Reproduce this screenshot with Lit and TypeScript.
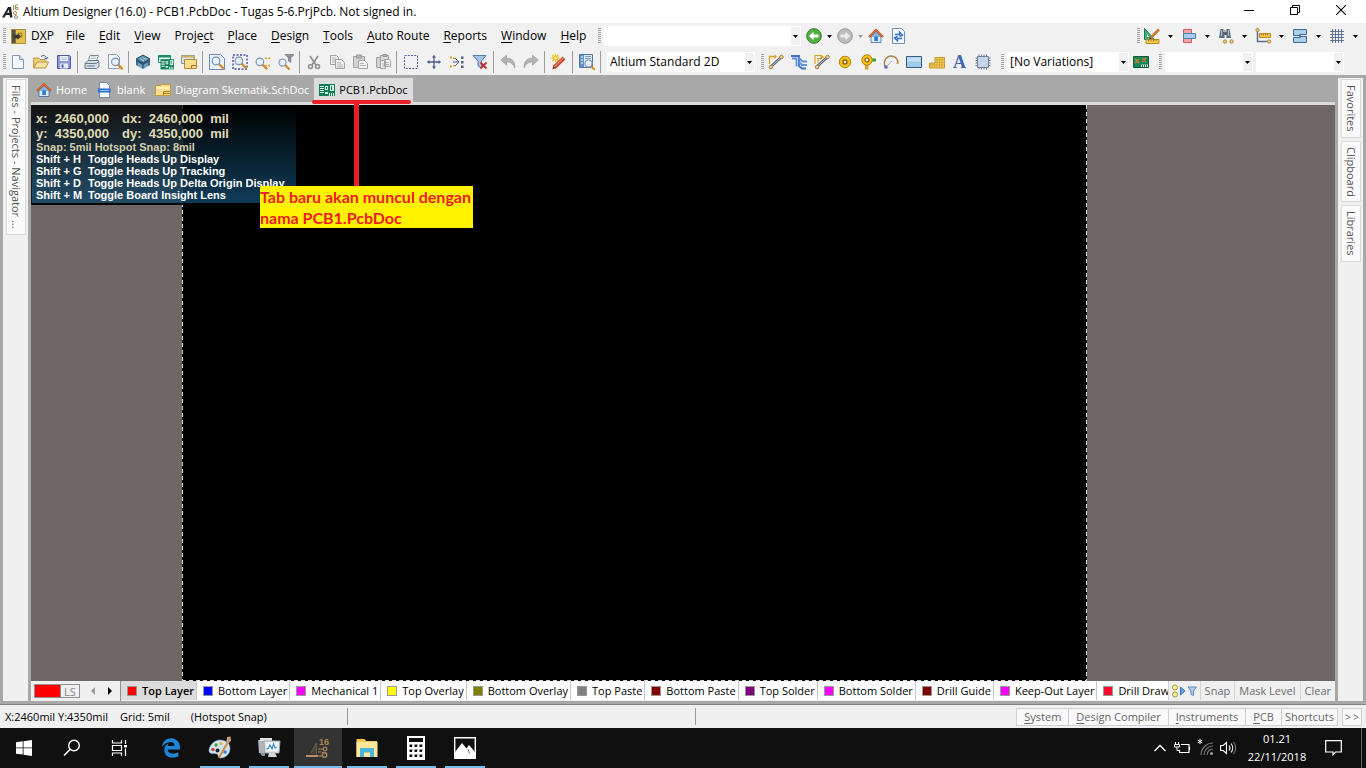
import { LitElement, html, svg, css, nothing } from "lit";
import { customElement, state } from "lit/decorators.js";
import { classMap } from "lit/directives/class-map.js";
import { styleMap } from "lit/directives/style-map.js";

const lens = svg`
  <path d="M9.5 9.5 14 14" stroke="#d98a2b" stroke-width="2.6" stroke-linecap="round"/>
  <circle cx="6.5" cy="6.5" r="4.2" fill="#e4f0fb" stroke="#7d93b5" stroke-width="1.3"/>
  <path d="M4.3 6.2a2.4 2.4 0 0 1 2.2-2" stroke="#fff" fill="none"/>`;

const trackPads = svg`
  <path d="M3 12.500 13.500 3" stroke="#5c636e" stroke-width="2.600"/>
  <path d="M3 12.500 13.500 3" stroke="#b9c0c9" stroke-width="1"/>
  <circle cx="3" cy="13" r="1.800" fill="#e6cf9a" stroke="#a98243"/>
  <circle cx="13.500" cy="3" r="1.800" fill="#e6cf9a" stroke="#a98243"/>`;

const house = svg`
  <path d="M3 8v6.500h10V8L8 3.400z" fill="#7fb2e4" stroke="#4a6f9e" stroke-width=".8"/>
  <path d="M3.600 9h8.800v5H3.600z" fill="#dceafa"/>
  <path d="M6.300 8.500h3.600V13H6.300z" fill="#2a76c8"/>
  <path d="M1 9 8 2l7 7" fill="none" stroke="#c4501e" stroke-width="2.200"/>
  <path d="M1.400 8.200 8 1.800l6.600 6.400" fill="none" stroke="#f0935c" stroke-width=".7"/>`;

const board = svg`
  <path d="M0 2h16v12H0z" fill="#0f7d57"/>
  <path d="M1 4h4v1H1zm0 2h4v1H1zm0 2h4v1H1zm0 2h4v1H1z" fill="#d5f3e4"/>
  <path d="M6 4h3v4H6zM6 10h3v2H6z" fill="#d5f3e4"/>
  <path d="M7 5h1v2H7z" fill="#0f7d57"/>
  <path d="M11 3h4v6h-4z" fill="#d5f3e4"/>
  <path d="M12 4h1v4h-1z" fill="#0f7d57"/>
  <path d="M10 11h1v3h-1zm2 0h1v3h-1zm2 0h1v3h-1z" fill="#d5f3e4"/>`;

const sheet = svg`
  <path d="M.5 3.500h5l1-1h9v11H.5z" fill="#f6dc8c" stroke="#c49b3a"/>
  <path d="M1.500 5h13v2h-13z" fill="#fdf0c0"/>
  <path d="M8.500 9.500H15M8.500 9.500V13M8.500 11.500H15" stroke="#a67c22" fill="none"/>`;

const ICONS: Record<string, unknown> = {
  newFile: svg`<path d="M2.500 1.500h7l4 4v9h-11z" fill="#f4f9ff" stroke="#7f97bb"/><path d="M9.500 1.500v4h4" fill="#cfe0f3" stroke="#7f97bb"/>`,
  open: svg`<path d="M.8 14V4h5l1.200 1.500h5V8" fill="#f3d27c" stroke="#bb8f38"/><path d="M.8 14 4 8h11.500l-3 6z" fill="#fbe5a4" stroke="#bb8f38"/><path d="M8 2.500c3-2 5-.5 5.500 2M11.500 4l2 1.200L15 3" fill="none" stroke="#4a5f80"/>`,
  save: svg`<path d="M1.500 1.500h12l1 1v12h-13z" fill="#8b9cd4" stroke="#4a5ba3"/><path d="M4 2h8v5H4z" fill="#eaf2ff"/><path d="M5 4h6M5 5.500h6" stroke="#a9b6da" stroke-width=".7"/><path d="M4 9.500h8v5H4z" fill="#e7eaf5"/><path d="M5.500 10.500h2v3h-2z" fill="#4a5ba3"/>`,
  print: svg`<path d="M6 1.500h8.500l-2 5h-8z" fill="#fff" stroke="#7a8798"/><path d="M7 3h5M6.500 4.500h5" stroke="#9aa7b8" stroke-width=".7"/><path d="M1 9.500 4 6.500h10.500l.5 3v3l-2.500 2H1z" fill="#d5dde8" stroke="#6d7a8d"/><path d="M1 9.500h11.500l2.500-2.500M2.500 12h8" stroke="#6d7a8d" fill="none"/>`,
  preview: svg`<path d="M1.500.5h8l3 3v11h-11z" fill="#f4f9ff" stroke="#8a9ebd"/><g transform="translate(2.500 2) scale(.9)">${lens}</g>`,
  layers: svg`<path d="M1 7v4l7 4 7-4V7z" fill="#3f6c8e"/><path d="M4 9v5M6 10v4.500M10 10v4.500M12 9v4" stroke="#a9cfe0"/><path d="M8 1 15 5 8 9 1 5z" fill="#5d8fae" stroke="#27465f"/><path d="M1 5v2l7 4 7-4V5L8 9z" fill="#2f5875"/><path d="M5 4.500 9 7M7.500 3.300 11.500 5.600" stroke="#b8dcea"/>`,
  boards: svg`<path d="M.5 1.500h12v7H.5z" fill="#e7f6ef" stroke="#159060"/><path d="M.5 1.500h12v2H.5z" fill="#159060"/><g transform="translate(2.500 3.500) scale(.85)">${board}</g>`,
  sheets: svg`<path d="M.5 1.500h13v8H.5z" fill="#cfe0ee" stroke="#7f97ad"/><path d="M.5 1.500h13v2H.5z" fill="#d9ae55"/><path d="M3.500 5.500h12v9h-12z" fill="#f8dd8a" stroke="#b98a30"/><path d="M10.500 11.500H15M10.500 11.500V14" stroke="#9c7020" fill="none"/>`,
  zoomDoc: svg`<path d="M.5.5h11l4 4v11H.5z" fill="#e9f3fe" stroke="#6f8cba"/><g transform="translate(1 1) scale(.92)">${lens}</g>`,
  zoomArea: svg`<path d="M1 1h14v14H1z" fill="none" stroke="#3d4db0" stroke-width="1.400" stroke-dasharray="2 1.500"/><g transform="translate(1 1) scale(.9)">${lens}</g>`,
  zoomDots: svg`<g transform="translate(-1 2) scale(.9)">${lens}</g><path d="M10 3.500l2 1.500M15 3.500 13.500 5M10 12.500l2-1.500M15 12.500 13.500 11" stroke="#d9a21d" stroke-width="1.500"/>`,
  zoomFilter: svg`<g transform="translate(-1 3) scale(.85)">${lens}</g><path d="M7 .5h9L12.800 4v4.500L10.500 7V4z" fill="#8b929c" stroke="#666c75" stroke-width=".6"/>`,
  cut: svg`<path d="M4 2l6 9M12 2 6 11" stroke="#8f8f8f" stroke-width="1.700"/><circle cx="4.500" cy="12.500" r="2" fill="none" stroke="#8f8f8f" stroke-width="1.500"/><circle cx="11.500" cy="12.500" r="2" fill="none" stroke="#8f8f8f" stroke-width="1.500"/>`,
  copy: svg`<path d="M1.500 1.500h6l2 2v7h-8z" fill="#eee" stroke="#a2a2a2"/><path d="M3 4h4M3 6h3M3 8h3" stroke="#b5b5b5"/><path d="M6.500 5.500h6l3 3v6h-9z" fill="#eee" stroke="#a2a2a2"/><path d="M8 9h4M8 11h6M8 13h6" stroke="#b5b5b5"/>`,
  paste: svg`<path d="M1.500 2.500h11v11h-11z" fill="#d2d2d2" stroke="#a0a0a0"/><path d="M4.500 1h5v3h-5z" fill="#b5b5b5" stroke="#999"/><path d="M6.500 6.500h6l3 3v5h-9z" fill="#f2f2f2" stroke="#a2a2a2"/><path d="M8 9.500h4M8 11.500h6" stroke="#b5b5b5"/>`,
  pasteArray: svg`<path d="M1.500 3.500h9v10h-9z" fill="#d2d2d2" stroke="#a0a0a0"/><path d="M5.500 1.500h8v8h-8z" fill="#dadada" stroke="#a0a0a0"/><path d="M8 .5h4v2H8z" fill="#b5b5b5" stroke="#999"/><path d="M5.500 6.500h5v8h-5zM9.500 5.500h5l1 1v6h-6z" fill="#f2f2f2" stroke="#a2a2a2"/><path d="M11 8.500h3M11 10.500h3M7 10h2M7 12h2" stroke="#b5b5b5"/>`,
  select: svg`<path d="M1.500 1.500h13v13h-13z" fill="none" stroke="#5360a8" stroke-dasharray="2 1.250"/>`,
  move: svg`<path d="M8 2v12M2 8h12" stroke="#4a5a94" stroke-width="1.300"/><path d="M8 .8 10 3.500H6zM8 15.200 10 12.500H6zM.8 8 3.500 6v4zM15.200 8 12.500 6v4z" fill="#4a5a94"/>`,
  deselect: svg`<path d="M1 3.500h2M4 4l2 .5M1 12.500h2M4 12l2-.5" stroke="#e0ab2c" stroke-width="1.800"/><path d="M6 4l4 4-4 4M4 8h5" stroke="#555f78" fill="none"/><path d="M12 2.500h2.500v2.500H12zM12 7h2.500v2.500H12zM12 11.500h2.500V14H12z" fill="#56617f"/>`,
  clearFilter: svg`<path d="M1 1.500h13L9.500 7v7L6 12V7z" fill="#a5c4e8" stroke="#587bb0"/><path d="M8.500 8.500l6 6M14.500 8.500l-6 6" stroke="#c22f2f" stroke-width="1.800"/>`,
  undo: svg`<path d="M.8 6 6.500 1.200v3C12 4 15.500 8 14.800 14 13 9.600 10.500 8 6.500 8v3.200z" fill="#b3b3b3" stroke="#989898" stroke-width=".7"/>`,
  redo: svg`<path d="M15.200 6 9.500 1.200v3C4 4 .5 8 1.200 14 3 9.600 5.500 8 9.500 8v3.200z" fill="#b3b3b3" stroke="#989898" stroke-width=".7"/>`,
  wizard: svg`<path d="M3 13.500 13 4" stroke="#c9402c" stroke-width="4"/><path d="M3 13 12.500 4" stroke="#f0886f" stroke-width="1.300"/><path d="m1.500 15.500.8-3.500L4.500 14z" fill="#5a3a2a"/><path d="M4.500 0v8M.5 4h8M1.500 1l6 6M7.500 1l-6 6" stroke="#f1c21b" stroke-width="1.300"/><circle cx="4.500" cy="4" r="1.200" fill="#fff6c2"/>`,
  browse: svg`<path d="M.5.5h13v13H.5z" fill="#dbe9f7" stroke="#4f75a5"/><path d="M1 1h4v12H1z" fill="#5f92cc"/><path d="M2 3h2M2 6h2M2 9h2" stroke="#fff"/><path d="M6 2.500h6M6 4.500h6" stroke="#7f9fc4"/><g transform="translate(4 4) scale(.85)">${lens}</g>`,
  route: svg`${trackPads}<path d="M1.500 10V2.500h6" stroke="#d9a21d" stroke-width="1.300" fill="none"/><path d="M6.500.3 9 2.500 6.500 5z" fill="#d9a21d"/>`,
  multiRoute: svg`<path d="M0 2h8v10l3 2.500h4" fill="none" stroke="#4272c0" stroke-width="1.800"/><path d="M1 4.500h4.500v8M8 4l3.500 3.500H16M8 8l3 3h5" fill="none" stroke="#5f92dd" stroke-width="1.800"/>`,
  diffRoute: svg`${trackPads}<path d="M1 10V1.500h6M4 9V4.500h3" stroke="#d9a21d" stroke-width="1.200" fill="none"/><path d="M6.500 0 10 3 6.500 6z" fill="#d9a21d"/>`,
  pad: svg`<circle cx="8" cy="8" r="5.700" fill="#f5c21c" stroke="#b98508"/><circle cx="8" cy="8" r="2" fill="#fff8d8" stroke="#8a5d05" stroke-width="1.300"/>`,
  via: svg`<path d="M10 4.500h6v3h-6z" fill="#36a03a"/><path d="M5 9h3.500v6.500H5z" fill="#dca11d"/><circle cx="7" cy="6" r="5.200" fill="#f5c21c" stroke="#b98508"/><circle cx="7" cy="6" r="2" fill="#fff8d8" stroke="#8a5d05" stroke-width="1.200"/>`,
  arc: svg`<path d="M2 12.500C0 7 3.500 2 8 2c4 0 6.500 2.500 7 7" fill="none" stroke="#a88149" stroke-width="1.400"/><path d="M3 13 9 7" stroke="#8c95a8" stroke-dasharray="2 1"/><path d="M1.500 11.500h3v3h-3z" fill="#5b63b5"/><path d="M13.500 8.500h2V10h-2z" fill="#c79a4d"/>`,
  fill: svg`<path d="M.5 2.500h15v11H.5z" fill="#9fcbec" stroke="#3d5c7d"/><path d="M1.500 3.500h13v4h-13z" fill="#c3e0f5"/>`,
  polygon: svg`<path d="M6 3.500h9.500v10.500H.5V9H6z" fill="#f3cf62" stroke="#c99a27"/><path d="M3 9v5M5.500 9v5M8 4v10M10.500 4v10M13 4v10M6 6h9M6 8.500h9M1 11h14" stroke="#c99a27" stroke-width=".7"/>`,
  chip: svg`<path d="M4 .5v15M6.500.5v15M9 .5v15M11.500.5v15M.5 4h15M.5 6.500h15M.5 9h15M.5 11.500h15" stroke="#6b7d96"/><path d="M2.500 2.500h11v11h-11z" fill="#c5d6ea" stroke="#6b7d96"/>`,
  variant: svg`<path d="M.5 2.500h15v11H.5z" fill="#15875a" stroke="#0b5c3c"/><path d="m2 5 4 4M6 5 2 9M9 4l4 4M13 4 9 8" stroke="#d87c2a" stroke-width="1.500"/><path d="M8 10.500h7V13H8z" fill="#e3f1ea"/><path d="M9.500 10.500V13M11.500 10.500V13M13.500 10.500V13" stroke="#15875a"/>`,
  back: svg`<circle cx="8" cy="8" r="7.300" fill="#55ad44" stroke="#2f7a28"/><path d="M3 8 7.500 3.800v2.600h5v3.200h-5v2.600z" fill="#fff"/>`,
  forward: svg`<circle cx="8" cy="8" r="7.300" fill="#bdbdbd" stroke="#9a9a9a"/><path d="M13 8 8.500 3.800v2.600h-5v3.200h5v2.600z" fill="#eee"/>`,
  house,
  refresh: svg`<path d="M1.500.5h9l3 3v12h-12z" fill="#f6faff" stroke="#6f8cba"/><path d="M4 6.500h4.500v-2.300L11.500 7 8.500 8.500M11 10.500H6.500v2.300L3.500 10 6.500 8.500" fill="none" stroke="#2f6fbe" stroke-width="1.400"/>`,
  board,
  sheet,
  blank: svg`<path d="M2.500.5h7l3 3v12h-10z" fill="#f6faff" stroke="#6f8cba"/><path d="M1 6.500h12.500v4H1z" fill="#2d6fc9"/><path d="M3 8.500h9" stroke="#9cc2f0"/>`,
  dxp: svg`<path d="M.5.5h15v15H.5z" fill="#e0c24f" stroke="#a68a2c"/><path d="M1 1h4v14H1z" fill="#55524a"/><path d="M3 6h4V4.500L11 8l-4 3.500V10H3z" fill="#3e3b34"/><path d="M7.500 4.500h4v4H9" stroke="#8a7020" fill="none"/>`,
  draw: svg`<path d="M.5.500V11.500h10z" fill="#3fb078" stroke="#1c7a4c"/><path d="M3 6.500v2.500h2.500z" fill="#fff"/><path d="M6.500 10 15 1.500" stroke="#c9792b" stroke-width="2.600"/><path d="m5 11.500.8-2.500 1.700 1.700z" fill="#333"/><path d="M2 11.500h13v4H2z" fill="#f5cc52" stroke="#b78a22"/><path d="M4.500 11.500v2M7 11.500v2M9.500 11.500v2M12 11.500v2" stroke="#8a6512" stroke-width=".8"/>`,
  align: svg`<path d="M2.500 1.500h8v4h-8zM2.500 10.500h8v4h-8z" fill="#f1a6a6" stroke="#cc5b62"/><path d="M2.500 5.500h12v5h-12z" fill="#a9cdec" stroke="#4f7fae"/>`,
  find: svg`<path d="M2.500 1h3v3h1V2h1v2h1V1h3l1.500 9H8.500V7h-2v3H1z" fill="#5d6a7c"/><path d="M3.500 2v6M10.500 2v6" stroke="#b4c0cf"/><circle cx="7" cy="13.500" r="1.700" fill="#e6c67e" stroke="#b28a3d"/><circle cx="13.500" cy="13.500" r="1.700" fill="#e6c67e" stroke="#b28a3d"/>`,
  dimension: svg`<path d="M2.500 2v11.500h11" stroke="#5c6f8a" stroke-width="1.500" fill="none"/><circle cx="2.500" cy="2" r="1.600" fill="#e6c67e" stroke="#b28a3d"/><circle cx="14" cy="13.500" r="1.600" fill="#e6c67e" stroke="#b28a3d"/><path d="M4.500 5.500h11v4h-11z" fill="#f5cc52" stroke="#c5861f"/><path d="M6.500 6v1.500M8.500 6v1.500M10.500 6v1.500M12.500 6v1.500" stroke="#8a6512" stroke-width=".8"/>`,
  room: svg`<path d="M1.500 1.500h13v5h-7v2h7v6h-13v-5h7v-2h-7z" fill="#a9cfea" stroke="#3f6d96"/>`,
  grid: svg`<path d="M3.500 1v14M6.500 1v14M9.500 1v14M12.500 1v14M1 3.500h14M1 6.500h14M1 9.500h14M1 12.500h14" stroke="#5c7594"/>`,
};

const icon = (name: string, size = 16) =>
  html`<svg width=${size} height=${size} viewBox="0 0 16 16" fill="none" aria-hidden="true">${ICONS[name]}</svg>`;

const MENU: [string, string, string][] = [
  ["D", "X", "P"], ["", "F", "ile"], ["", "E", "dit"], ["", "V", "iew"], ["Proje", "c", "t"],
  ["", "P", "lace"], ["", "D", "esign"], ["", "T", "ools"], ["", "A", "uto Route"],
  ["", "R", "eports"], ["", "W", "indow"], ["", "H", "elp"],
];

const STANDARD_TOOLS = [
  ["newFile", "open", "save"],
  ["print", "preview"],
  ["layers", "boards", "sheets"],
  ["zoomDoc", "zoomArea", "zoomDots", "zoomFilter"],
  ["cut", "copy", "paste", "pasteArray"],
  ["select", "move", "deselect", "clearFilter"],
  ["undo", "redo"],
  ["wizard"],
  ["browse"],
];

const PLACE_TOOLS = ["route", "multiRoute", "diffRoute", "pad", "via", "arc", "fill", "polygon", "letter", "chip"];
const UTILITY_TOOLS = ["draw", "align", "find", "dimension", "room", "grid"];

const DOCUMENTS = [
  { name: "Home", icon: "house" },
  { name: "blank", icon: "blank" },
  { name: "Diagram Skematik.SchDoc", icon: "sheet" },
  { name: "PCB1.PcbDoc", icon: "board" },
];

const LAYERS = [
  { name: "Top Layer", color: "#ff0000" },
  { name: "Bottom Layer", color: "#0000ff" },
  { name: "Mechanical 1", color: "#ff00ff" },
  { name: "Top Overlay", color: "#ffff00" },
  { name: "Bottom Overlay", color: "#808000" },
  { name: "Top Paste", color: "#808080" },
  { name: "Bottom Paste", color: "#800000" },
  { name: "Top Solder", color: "#800080" },
  { name: "Bottom Solder", color: "#ff00ff" },
  { name: "Drill Guide", color: "#800000" },
  { name: "Keep-Out Layer", color: "#ff00ff" },
  { name: "Drill Drawing", color: "#ff0a2a" },
];

const SHORTCUTS = [
  ["Shift + H", "Toggle Heads Up Display"],
  ["Shift + G", "Toggle Heads Up Tracking"],
  ["Shift + D", "Toggle Heads Up Delta Origin Display"],
  ["Shift + M", "Toggle Board Insight Lens"],
];

const PANELS: [string, string, number][] = [
  ["S", "ystem", 1], ["D", "esign Compiler", 1], ["I", "nstruments", 1], ["P", "CB", 1], ["", "Shortcuts", 0],
];

const TASKS = [
  {
    label: "Microsoft Edge", state: "",
    art: svg`<svg width="20" height="20" viewBox="0 0 512 512"><path fill="#1b86d8" d="M486.286 243.671c0-44.032-7.754-84.465-28.801-122.405C416.498 47.879 343.912 8.001 258.893 8.001 118.962 7.724 40.617 113.214 26.056 227.679c42.429-61.312 117.073-121.376 220.375-124.966 0 0 109.666 0 99.419 104.957H169.997c6.369-37.386 18.554-58.986 34.339-78.926-75.048 34.900-121.850 96.096-120.742 188.315.83 71.448 50.124 144.836 120.743 171.976 83.357 31.847 192.776 7.200 240.132-21.321V363.307c-80.864 56.494-270.871 60.925-272.255-67.572h314.073z"/></svg>`,
  },
  {
    label: "Paint", state: "running",
    art: svg`<svg width="24" height="24" viewBox="0 0 24 24"><path d="M12 4c6 0 10 3.500 10 8.500S18 22 12.500 22c-3 0-1.500-3-3.500-4s-8 1-8-3.500S6 4 12 4z" fill="#cfe4f2" stroke="#86a9c4" stroke-width=".6"/><circle cx="5" cy="13.500" r="1.700" fill="#cf3a31"/><circle cx="8" cy="9" r="1.700" fill="#45a047"/><circle cx="13" cy="7.500" r="1.600" fill="#e7b21f"/><circle cx="9.500" cy="14.500" r="2" fill="#1d2228"/><circle cx="17" cy="16" r="1.800" fill="#3b7fd0"/><path d="M11 21.500 20 6" stroke="#d8883b" stroke-width="2"/><path d="M18.500 6.500 19 1l3.500-.5.5 4-2.500 3z" fill="#c9a077"/></svg>`,
  },
  {
    label: "Performance Monitor", state: "running",
    art: svg`<svg width="24" height="24" viewBox="0 0 24 24"><path d="M1 4h11v13H2z" fill="#aeb4ba"/><path d="M3 2h12v3H3z" fill="#dfe3e6"/><path d="M7 5h16l-1 12H8z" fill="#f1f5f8" stroke="#9aa3ab"/><path d="M9 7h12l-.5 8.500h-11z" fill="#fff" stroke="#c3ccd4" stroke-width=".5"/><path d="m9.500 13 2-1 1.500-3 2 4 1.500-5 1.500 4 2-.5" fill="none" stroke="#2f7fc4" stroke-width="1.100"/><path d="M12 17h6l2 4H11z" fill="#d3d7da"/><path d="M3 17h5v3H5z" fill="#8a9096"/></svg>`,
  },
  {
    label: "Altium Designer", state: "current",
    art: svg`<svg width="26" height="24" viewBox="0 0 26 24"><path d="M5 18 11.500 5v13z" fill="#4a4238"/><path d="M6 17 11.500 7v12" stroke="#6e5d45" fill="none"/><path d="M1 20h12" stroke="#b3946a" stroke-width="2"/><circle cx="20" cy="13" r="1.800" fill="none" stroke="#a88a5f" stroke-width="1.300"/><circle cx="19.500" cy="19" r="2.300" fill="none" stroke="#a88a5f" stroke-width="1.500"/><path d="M13 13h5M13 16h4l1.500 1.500M13 20h4" stroke="#a88a5f"/><text x="14" y="9" font-family="Liberation Sans" font-size="9" font-weight="700" fill="#a88a5f">16</text></svg>`,
  },
  {
    label: "File Explorer", state: "running",
    art: svg`<svg width="24" height="22" viewBox="0 0 24 22"><path d="M1.500 2h8l1.500 2h11v16h-20.500z" fill="#f0c64f"/><path d="M1.500 5h21v15h-21z" fill="#fce79a"/><path d="M5 20v-9h14v9h-4v-4.500H9V20z" fill="#4cb3d9"/></svg>`,
  },
  {
    label: "Calculator", state: "running",
    art: svg`<svg width="18" height="24" viewBox="0 0 18 24"><path d="M0 0h18v24H0z" fill="#fff"/><path d="M2 2h14v4H2zM2.500 8.500h3L5 11H2.500zM7.500 8.500h3L10 11H7.500zM12.500 8.500h3L15 11h-2.500zM2.500 13.500h3L5 16H2.500zM7.500 13.500h3L10 16H7.500zM12.500 13.500h3L15 16h-2.500zM2.500 18.500h3L5 21H2.500zM7.500 18.500h3L10 21H7.500zM12.500 18.500h3L15 21h-2.500z" fill="#101010"/></svg>`,
  },
  {
    label: "Photos", state: "running",
    art: svg`<svg width="22" height="22" viewBox="0 0 22 22"><path d="M.7.700h20.600v20.600H.7z" fill="#101010" stroke="#fff" stroke-width="1.400"/><path d="M1 15 8 6l4.500 5.500L15 8l6 7v6H1z" fill="#fff"/><path d="m14 12 1.500 4.500" stroke="#101010" stroke-width=".6"/></svg>`,
  },
];

@customElement("app-root")
export class AppRoot extends LitElement {
  @state() private document = "PCB1.PcbDoc";
  @state() private layer = "Top Layer";

  static styles = css`
    :host {
      display: flex;
      flex-direction: column;
      height: 100vh;
      overflow: hidden;
      background: #f0f0f0;
      color: #000;
      font: 12px/16px "Open Sans", "Noto Sans", sans-serif;
    }
    * { box-sizing: border-box; }
    svg { display: block; flex: none; }
    button, select {
      margin: 0;
      padding: 0;
      border: 0;
      border-radius: 0;
      background: none;
      color: inherit;
      font: inherit;
      white-space: nowrap;
    }
    u { text-underline-offset: 2px; }

    .titlebar { display: flex; align-items: center; height: 23px; background: #fff; flex: none; padding-right: 2px; }
    .titlebar h1 { flex: 1; margin: 0 0 0 4px; font: inherit; }
    .logo { margin-left: 2px; }
    .window-button { display: grid; place-items: center; width: 46px; height: 20px; align-self: flex-start; }

    .bar { display: flex; align-items: center; height: 26px; flex: none; padding-left: 3px; background: #f1f1f1; }
    .grip {
      width: 3px;
      height: 16px;
      flex: none;
      background: repeating-linear-gradient(#a3a3a3 0 1px, #f1f1f1 1px 2px);
    }
    .menu { display: flex; align-items: center; margin-right: 5px; }
    .menu-item { display: flex; align-items: center; gap: 5px; padding: 0 7px; height: 22px; }
    .menu-item.first { padding: 0 5px; }
    .combo {
      appearance: none;
      height: 20px;
      padding: 0 12px 0 3px;
      background:
        url('data:image/svg+xml,<svg xmlns="http://www.w3.org/2000/svg" width="5" height="3"><path d="M0 0h5L2.500 3z"/></svg>') right 3px center no-repeat,
        linear-gradient(#f0f0f0, #f0f0f0) right 1px center / 9px 18px no-repeat,
        #fff;
    }
    .combo.address { width: 198px; margin: 0 1px 0 2px; }
    .combo.view { width: 148px; margin: 0 6px 0 4px; }
    .combo.variations { width: 122px; margin-left: 3px; }
    .combo.small { width: 88px; margin-left: 3px; }
    .tool { display: grid; place-items: center; width: 23px; height: 22px; flex: none; }
    .glyph { color: #3f66b4; font: bold 18px/18px "Liberation Serif", serif; }
    .drop { width: 8px; height: 16px; display: grid; place-items: center; }
    .divider { width: 1px; height: 22px; margin: 0 2px; background: #9d9d9d; flex: none; }
    .group { display: flex; align-items: center; }
    .group.end { margin-left: auto; padding-right: 4px; }
    .group.end .drop { margin: 0 3px; }
    .tools-gap { margin-right: 7px; }

    .workspace {
      flex: 1;
      min-height: 0;
      display: grid;
      grid-template-columns: 25px minmax(0, 1fr) 25px;
      gap: 3px;
      padding: 0 3px;
      background: #a8a8a8;
      border-bottom: 3px solid #a8a8a8;
      font-size: 11px;
    }
    .strip {
      display: flex;
      flex-direction: column;
      align-items: flex-start;
      gap: 3px;
      margin-top: 3px;
      padding: 1px 3px;
      background: #f0f0f0;
    }
    .strip button {
      writing-mode: vertical-rl;
      width: 20px;
      padding: 5px 0;
      border: 1px solid #d9d9d9;
      background: #fbfbfb;
      color: #555;
      line-height: 18px;
    }
    .editor { position: relative; display: flex; flex-direction: column; min-width: 0; }
    .documents { display: flex; height: 27px; padding-top: 3px; flex: none; }
    .document { display: flex; align-items: center; gap: 4px; height: 24px; padding: 0 5px; color: #fff; }
    .document.active { background: #dcdcdc; color: #000; }

    .canvas {
      flex: 1;
      min-height: 0;
      border-top: 3px solid #dcdcdc;
      background: #6d6866;
      padding: 0 19% 0 11.6%;
    }
    .sheet-area {
      height: 100%;
      background:
        repeating-linear-gradient(#d8d8d8 0 4px, #000 4px 7px) left / 1px 100% no-repeat,
        repeating-linear-gradient(#d8d8d8 0 4px, #000 4px 7px) right / 1px 100% no-repeat,
        repeating-linear-gradient(90deg, #d8d8d8 0 4px, #000 4px 7px) bottom / 100% 1px no-repeat,
        #000;
    }
    .hud {
      position: absolute;
      left: 0;
      top: 30px;
      width: 265px;
      padding: 6px 0 2px 4px;
      border-left: 1px solid #1a1a1a;
      border-bottom: 2px solid rgba(0, 0, 0, 0.8);
      background: linear-gradient(rgba(0, 0, 0, 0.82), rgba(18, 68, 100, 0.84) 95%);
      color: #fff;
      font: bold 11px/12px "Liberation Sans", Arial, sans-serif;
    }
    .coords { display: grid; grid-template-columns: 86px auto; width: max-content; color: #e0dcb4; font-size: 13px; line-height: 15px; white-space: pre; }
    .snap { color: #d3cfaa; }
    .keys { display: grid; grid-template-columns: 52px auto; margin: 0; white-space: nowrap; }
    .keys dt, .keys dd { margin: 0; }

    .mark-tab { position: absolute; left: 281px; top: 25px; width: 99px; height: 4px; border-radius: 2px; background: #e8202a; }
    .mark-line { position: absolute; left: 323px; top: 25px; width: 5px; height: 87px; border-radius: 2px; background: #e8202a; }
    .callout {
      position: absolute;
      left: 229px;
      top: 111px;
      margin: 0;
      width: 213px;
      background: #fff200;
      color: #ed1c24;
      font: bold 16px/21px Lato, "Open Sans", sans-serif;
      white-space: nowrap;
    }

    .layers { display: flex; align-items: stretch; height: 20px; flex: none; background: #f0f0f0; overflow: hidden; }
    .layer-set { display: flex; align-self: center; width: 46px; height: 14px; margin: 0 4px 0 3px; border: 1px solid #909090; color: #888; line-height: 13px; }
    .layer-set i { width: 25px; background: #f00; }
    .layer-set span { flex: 1; border-left: 1px solid #909090; text-align: center; }
    .scroll { display: grid; place-items: center; width: 17px; }
    .layer-tabs { display: flex; flex: 1; min-width: 0; overflow: hidden; margin-left: 2px; border-left: 1px solid #909090; }
    .layer { display: flex; align-items: center; gap: 5px; height: 19px; padding: 0 2px 0 6px; border-right: 1px solid #c8c8c8; background: #fff; flex: none; }
    .layer.active { background: #dcdcdc; font-weight: 600; }
    .swatch { width: 10px; height: 10px; border: 1px solid #999; }
    .layer-tools { display: flex; flex: none; color: #6b6b6b; }
    .layer-tools button { height: 19px; padding: 0 4px; border-left: 1px solid #d4d4d4; }
    .layer-tools .filter { padding: 0 3px; }

    .status { display: flex; align-items: center; height: 24px; flex: none; border-top: 1px solid #808080; background: #f0f0f0; padding-left: 5px; font-size: 11px; }
    .readout { display: flex; gap: 12px; width: 342px; flex: none; white-space: nowrap; }
    .readout span:last-child { margin-left: 9px; }
    .cell { width: 348px; height: 17px; flex: 0 1 348px; border-left: 1px solid #999; }
    .cell.last { flex: 1; }
    .panels { display: flex; margin-right: 4px; color: #666; }
    .panels button { height: 18px; padding: 0 7px; border: 1px solid #d0d0d0; background: #f9f9f9; margin-left: -1px; }
    .panels button.flush { padding: 0 3px; }
    .panels button.more { margin-left: 4px; padding: 0 2px; font-size: 10px; }

    .taskbar { display: flex; height: 40px; flex: none; background: #101010; color: #fff; }
    .task { display: grid; place-items: center; width: 48px; height: 40px; margin-right: 1px; flex: none; }
    .task.system { margin-right: 0; }
    .task.edge { margin-left: 3px; }
    .task.running { background: linear-gradient(#76b9ed, #76b9ed) center bottom / 40px 2px no-repeat; }
    .task.current { background: linear-gradient(#76b9ed, #76b9ed) center bottom / 48px 2px no-repeat, #333; }
    .tray { display: flex; align-items: center; margin-left: auto; }
    .tray button { display: grid; place-items: center; width: 23px; height: 40px; }
    .tray button.clock { display: block; width: 74px; font-size: 11px; line-height: 18px; text-align: center; }
    .tray button.notices { width: 38px; }
    .peek { width: 5px; height: 40px; margin-left: 9px; border-left: 1px solid #666; }
  `;

  private tool(name: string) {
    return html`<button class="tool" aria-label=${name}>${name === "letter" ? html`<span class="glyph">A</span>` : icon(name)}</button>`;
  }

  private drop(color = "#000") {
    return html`<button class="drop" aria-label="More"><svg width="5" height="3"><path d="M0 0h5L2.500 3z" fill=${color} /></svg></button>`;
  }

  private combo(kind: string, label: string, value = "") {
    return html`<select class="combo ${kind}" aria-label=${label}><option>${value}</option></select>`;
  }

  render() {
    return html`
      <header class="titlebar">
        <svg class="logo" width="17" height="16" viewBox="0 0 17 16">
          <path d="M0 13.500 6 3h3l1.500 10.500H8L7.500 11H4l-1.500 2.500zM5 8.800h2.300L6.800 5.500z" fill="#222" />
          <path d="M11.500 1v5M13.500 1h2.500M13.500 1v4.500h2.500V3.500h-2.500" stroke="#a08a5a" fill="none" />
          <circle cx="13" cy="9" r="1.500" stroke="#a08a5a" fill="none" />
          <circle cx="14" cy="13" r="1.500" stroke="#a08a5a" fill="none" />
        </svg>
        <h1>Altium Designer (16.0) - PCB1.PcbDoc - Tugas 5-6.PrjPcb. Not signed in.</h1>
        <button class="window-button" aria-label="Minimize"><svg width="10" height="10"><path d="M0 5.500h10" stroke="#000" /></svg></button>
        <button class="window-button" aria-label="Restore"><svg width="10" height="10"><path d="M.5 2.500h7v7h-7zM2.500 2.500v-2h7v7h-2" fill="none" stroke="#000" /></svg></button>
        <button class="window-button" aria-label="Close"><svg width="10" height="10"><path d="m0 0 10 10M10 0 0 10" stroke="#000" stroke-width="1.100" /></svg></button>
      </header>

      <nav class="bar" aria-label="Main menu">
        <span class="grip"></span>
        <div class="menu">
          ${MENU.map(([before, key, after], i) => html`
            <button class=${classMap({ "menu-item": true, first: i === 0 })}>
              ${i === 0 ? icon("dxp", 15) : nothing}<span>${before}<u>${key}</u>${after}</span>
            </button>`)}
        </div>
        <span class="grip"></span>
        ${this.combo("address", "Address")}
        <div class="group">
          ${this.tool("back")}${this.drop()}${this.tool("forward")}${this.drop("#999")}${this.tool("house")}${this.tool("refresh")}
        </div>
        <div class="group end">
          <span class="grip"></span>
          ${UTILITY_TOOLS.map((name) => html`${this.tool(name)}${this.drop()}`)}
        </div>
      </nav>

      <div class="bar" role="toolbar" aria-label="PCB Standard">
        <span class="grip"></span>
        ${STANDARD_TOOLS.map((set) => html`<div class="group">${set.map((name) => this.tool(name))}</div><span class="divider"></span>`)}
        ${this.combo("view", "View configuration", "Altium Standard 2D")}
        <span class="grip"></span>
        <div class="group tools-gap">${PLACE_TOOLS.map((name) => this.tool(name))}</div>
        <span class="grip"></span>
        ${this.combo("variations", "Variant", "[No Variations]")}
        <div class="group tools-gap">${this.tool("variant")}</div>
        <span class="grip"></span>
        ${this.combo("small", "Room")}${this.combo("small", "Component")}
      </div>

      <main class="workspace">
        <div class="strip"><button>Files - Projects - Navigator ...</button></div>
        <section class="editor">
          <div class="documents" role="tablist">
            ${DOCUMENTS.map((d) => html`
              <button role="tab" class=${classMap({ document: true, active: d.name === this.document })} @click=${() => (this.document = d.name)}>
                ${icon(d.icon)}<span>${d.name}</span>
              </button>`)}
          </div>
          <div class="canvas"><div class="sheet-area"></div></div>
          <div class="hud">
            <div class="coords"><span>x:  2460,000</span><span>dx:  2460,000  mil</span><span>y:  4350,000</span><span>dy:  4350,000  mil</span></div>
            <div class="snap">Snap: 5mil Hotspot Snap: 8mil</div>
            <dl class="keys">${SHORTCUTS.map(([key, text]) => html`<dt>${key}</dt><dd>${text}</dd>`)}</dl>
          </div>
          <div class="mark-tab"></div>
          <div class="mark-line"></div>
          <p class="callout">Tab baru akan muncul dengan<br />nama PCB1.PcbDoc</p>
          <div class="layers">
            <button class="layer-set" aria-label="Layer sets"><i></i><span>LS</span></button>
            <button class="scroll" aria-label="Previous"><svg width="4" height="8"><path d="M4 0v8L0 4z" fill="#999" /></svg></button>
            <button class="scroll" aria-label="Next"><svg width="4" height="8"><path d="M0 0v8l4-4z" /></svg></button>
            <div class="layer-tabs" role="tablist">
              ${LAYERS.map((l) => html`
                <button role="tab" class=${classMap({ layer: true, active: l.name === this.layer })} @click=${() => (this.layer = l.name)}>
                  <span class="swatch" style=${styleMap({ background: l.color })}></span>${l.name}
                </button>`)}
            </div>
            <div class="layer-tools">
              <button class="filter" aria-label="Layer filter">
                <svg width="25" height="16" viewBox="0 0 25 16"><circle cx="3" cy="4.500" r="2.500" fill="#f6ef9a" stroke="#a39c3c" /><circle cx="3" cy="11.500" r="2.500" fill="#f6ef9a" stroke="#a39c3c" /><path d="M8.500 4v8l4.500-4z" fill="#6aa7e0" stroke="#3a74b5" /><path d="M16 4h8.500L21.500 8v4.500l-2.500-1V8z" fill="#b4cdee" stroke="#5f86c0" /></svg>
              </button>
              <button>Snap</button><button>Mask Level</button><button>Clear</button>
            </div>
          </div>
        </section>
        <div class="strip"><button>Favorites</button><button>Clipboard</button><button>Libraries</button></div>
      </main>

      <footer class="status">
        <div class="readout"><span>X:2460mil Y:4350mil</span><span>Grid: 5mil</span><span>(Hotspot Snap)</span></div>
        <div class="cell"></div><div class="cell last"></div>
        <div class="panels">
          ${PANELS.map(([key, rest]) => html`<button class=${classMap({ flush: !key })}><u>${key}</u>${rest}</button>`)}
          <button class="more">&gt; &gt;</button>
        </div>
      </footer>

      <div class="taskbar">
        <button class="task system" aria-label="Start"><svg width="16" height="16" viewBox="0 0 16 16"><path d="M0 2.200 6.700 1.300v6.200H0zM7.500 1.200 16 0v7.500H7.500zM0 8.300h6.700v6.300L0 13.700zM7.500 8.300H16V16l-8.500-1.200z" fill="#fff" /></svg></button>
        <button class="task system" aria-label="Search"><svg width="18" height="18" viewBox="0 0 18 18"><circle cx="11" cy="6.500" r="5.300" fill="none" stroke="#fff" stroke-width="1.400" /><path d="M7.200 10.300 1 16.500" stroke="#fff" stroke-width="1.500" /></svg></button>
        <button class="task system" aria-label="Task view"><svg width="18" height="16" viewBox="0 0 18 16"><path d="M1.500 0v3h9V0M1.500 16v-3h9v3M1.500 5.500h9v5h-9zM14.500 0v4M14.500 8.500V16" fill="none" stroke="#fff" stroke-width="1.200" /><path d="M13 5h3v2.500h-3z" fill="#fff" /></svg></button>
        ${TASKS.map((t, i) => html`
          <button class=${classMap({ task: true, edge: i === 0, running: t.state === "running", current: t.state === "current" })} aria-label=${t.label}>${t.art}</button>`)}
        <div class="tray">
          <button aria-label="Hidden icons"><svg width="12" height="8"><path d="m.5 7 5.500-5.500L11.500 7" fill="none" stroke="#fff" stroke-width="1.300" /></svg></button>
          <button aria-label="Battery"><svg width="17" height="14" viewBox="0 0 17 14"><path d="M7 3.500h8v8H5.500V9M15.500 6v3" fill="none" stroke="#fff" stroke-width="1.200" /><path d="M1.500 1v2.500M4.500 1v2.500M.5 3.500h5v2.500h-5zM3 6v3.500h2.500" fill="none" stroke="#fff" /></svg></button>
          <button aria-label="Network"><svg width="17" height="18" viewBox="0 0 17 18"><path d="M3 0v5M.8 1.200l4.400 2.600M5.200 1.200.8 3.800" stroke="#fff" /><path d="M4 16A12 12 0 0 1 16 4M7 16a9 9 0 0 1 9-9M10 16a6 6 0 0 1 6-6" fill="none" stroke="#777" stroke-width="1.200" /><circle cx="14.500" cy="14.500" r="1.600" fill="#999" /></svg></button>
          <button aria-label="Volume"><svg width="17" height="14" viewBox="0 0 17 14"><path d="M.6 4.500h2.600l3.300-3v11l-3.300-3H.6z" fill="none" stroke="#fff" stroke-width="1.100" /><path d="M9 4.500a4 4 0 0 1 0 5M11 2.500a7 7 0 0 1 0 9" fill="none" stroke="#fff" stroke-width="1.100" /><path d="M13.500 1a9.500 9.500 0 0 1 0 12" fill="none" stroke="#777" stroke-width="1.100" /></svg></button>
          <button class="clock">01.21<br />22/11/2018</button>
          <button class="notices" aria-label="Notifications"><svg width="17" height="16" viewBox="0 0 17 16"><path d="M.7.700h15.600v11.300H10.500L8 14.800V12H.7z" fill="none" stroke="#fff" stroke-width="1.200" /></svg></button>
          <span class="peek"></span>
        </div>
      </div>
    `;
  }
}
